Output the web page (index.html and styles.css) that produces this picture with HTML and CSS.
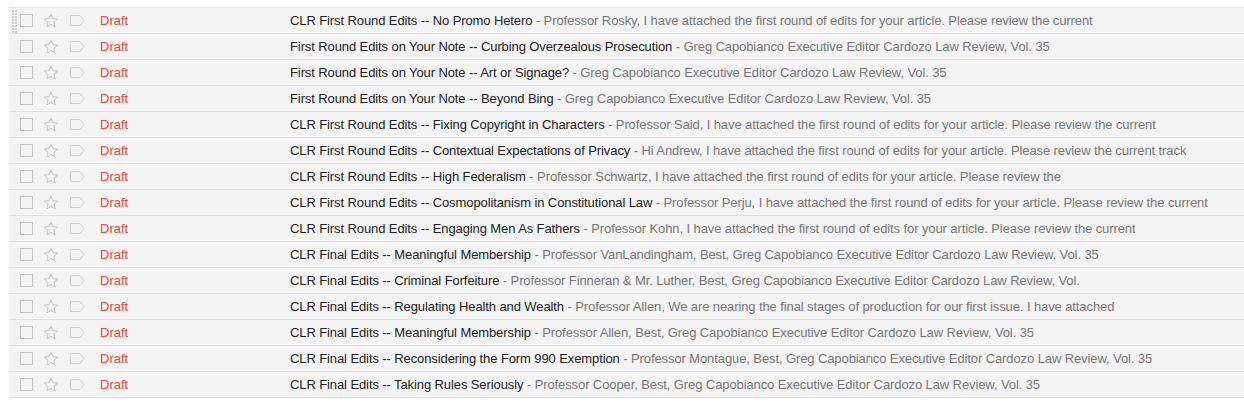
FILE: index.html
```html
<!DOCTYPE html>
<html lang="en">
<head>
    <meta charset="UTF-8">
    <title>Drafts</title>
    <link rel="stylesheet" href="styles.css">
</head>
<body>
    <div class="list" id="list"></div>
    <script>
        const mails = [
            ['CLR First Round Edits -- No Promo Hetero', 'Professor Rosky, I have attached the first round of edits for your article. Please review the current'],
            ['First Round Edits on Your Note -- Curbing Overzealous Prosecution', 'Greg Capobianco Executive Editor Cardozo Law Review, Vol. 35'],
            ['First Round Edits on Your Note -- Art or Signage?', 'Greg Capobianco Executive Editor Cardozo Law Review, Vol. 35'],
            ['First Round Edits on Your Note -- Beyond Bing', 'Greg Capobianco Executive Editor Cardozo Law Review, Vol. 35'],
            ['CLR First Round Edits -- Fixing Copyright in Characters', 'Professor Said, I have attached the first round of edits for your article. Please review the current'],
            ['CLR First Round Edits -- Contextual Expectations of Privacy', 'Hi Andrew, I have attached the first round of edits for your article. Please review the current track'],
            ['CLR First Round Edits -- High Federalism', 'Professor Schwartz, I have attached the first round of edits for your article. Please review the'],
            ['CLR First Round Edits -- Cosmopolitanism in Constitutional Law', 'Professor Perju, I have attached the first round of edits for your article. Please review the current'],
            ['CLR First Round Edits -- Engaging Men As Fathers', 'Professor Kohn, I have attached the first round of edits for your article. Please review the current'],
            ['CLR Final Edits -- Meaningful Membership', 'Professor VanLandingham, Best, Greg Capobianco Executive Editor Cardozo Law Review, Vol. 35'],
            ['CLR Final Edits -- Criminal Forfeiture', 'Professor Finneran &amp; Mr. Luther, Best, Greg Capobianco Executive Editor Cardozo Law Review, Vol.'],
            ['CLR Final Edits -- Regulating Health and Wealth', 'Professor Allen, We are nearing the final stages of production for our first issue. I have attached'],
            ['CLR Final Edits -- Meaningful Membership', 'Professor Allen, Best, Greg Capobianco Executive Editor Cardozo Law Review, Vol. 35'],
            ['CLR Final Edits -- Reconsidering the Form 990 Exemption', 'Professor Montague, Best, Greg Capobianco Executive Editor Cardozo Law Review, Vol. 35'],
            ['CLR Final Edits -- Taking Rules Seriously', 'Professor Cooper, Best, Greg Capobianco Executive Editor Cardozo Law Review, Vol. 35']
        ];

        const star = '<svg width="16" height="16" viewBox="0 0 16 16"><path d="M8 1.2l1.9 4.5 4.8.4-3.7 3.1 1.2 4.7L8 11.4l-4.2 2.5 1.2-4.7-3.7-3.1 4.8-.4z" fill="none" stroke="#c6c6c6" stroke-width="1"/></svg>';
        const label = '<svg width="15" height="11" viewBox="0 0 15 11"><path d="M0.5 0.5h9.5l4 5-4 5H0.5z" fill="none" stroke="#d0d0d0" stroke-width="1"/></svg>';

        const list = document.getElementById('list');
        mails.forEach((m, i) => {
            const row = document.createElement('div');
            row.className = 'row';
            row.innerHTML =
                '<div class="handle' + (i === 0 ? ' dots' : '') + '"></div>' +
                '<div class="check"></div>' +
                '<div class="star">' + star + '</div>' +
                '<div class="label">' + label + '</div>' +
                '<div class="sender">Draft</div>' +
                '<div class="text"><span class="subject">' + m[0] + '</span><span class="snippet"> - ' + m[1] + '</span></div>';
            list.appendChild(row);
        });
    </script>
</body>
</html>
```

FILE: styles.css
```css
body {
    margin: 0;
    background: #fff;
    font-family: "Liberation Sans", Arial, sans-serif;
    font-size: 13px;
}
.list {
    margin: 7px 0 0 9px;
    border-top: 1px solid #e0e0e0;
}
.row {
    display: flex;
    align-items: center;
    height: 25px;
    background: #f4f4f4;
    border-bottom: 1px solid #e0e0e0;
    white-space: nowrap;
    overflow: hidden;
}
.handle {
    width: 5px;
    height: 24px;
    flex: none;
    margin: 0 3px;
}
.dots {
    background-image:
        linear-gradient(to right, transparent 2px, #f4f4f4 2px),
        linear-gradient(to bottom, #cfcfcf 2px, transparent 2px);
    background-size: 3px 3px;
    background-position: 0 1px;
}
.check {
    width: 11px;
    height: 11px;
    flex: none;
    border: 1px solid #c4c4c4;
    margin-right: 10px;
}
.star {
    width: 16px;
    height: 16px;
    flex: none;
    margin-right: 11px;
}
.star svg, .label svg {
    display: block;
}
.label {
    width: 15px;
    flex: none;
    margin-right: 15px;
}
.sender {
    width: 190px;
    flex: none;
    color: #dd4b39;
}
.text {
    overflow: hidden;
    letter-spacing: -0.1px;
}
.subject {
    color: #222;
}
.snippet {
    color: #777;
}
```
